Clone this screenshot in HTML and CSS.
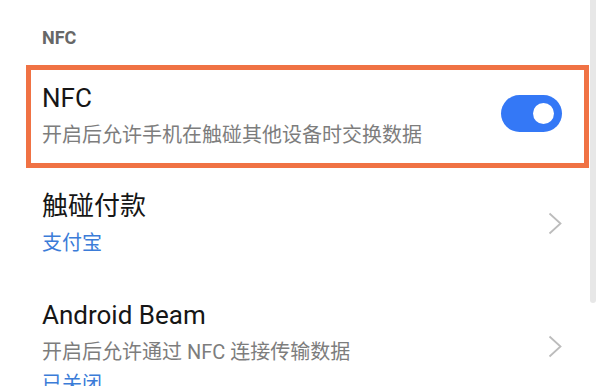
FILE: index.html
```html
<!doctype html>
<html lang="zh-CN">
  <head>
    <meta charset="UTF-8" />
    <meta name="viewport" content="width=device-width, initial-scale=1.0" />
    <title>NFC</title>
    <link rel="stylesheet" href="styles.css">
  </head>
  <body>
    <div class="page">
      <h2 class="section-title">NFC</h2>

      <div class="setting-row highlighted">
        <div class="setting-text">
          <div class="setting-name">NFC</div>
          <div class="setting-desc">开启后允许手机在触碰其他设备时交换数据</div>
        </div>
        <div class="switch on"><span class="switch-knob"></span></div>
      </div>

      <div class="setting-row">
        <div class="setting-text">
          <div class="setting-name">触碰付款</div>
          <div class="setting-value">支付宝</div>
        </div>
        <svg class="chevron" width="14" height="23" viewBox="0 0 14 23">
          <polyline points="1.5,1.5 12.5,11.5 1.5,21.5" />
        </svg>
      </div>

      <div class="setting-row">
        <div class="setting-text">
          <div class="setting-name">Android Beam</div>
          <div class="setting-desc">开启后允许通过 NFC 连接传输数据</div>
          <div class="setting-value">已关闭</div>
        </div>
        <svg class="chevron raised" width="14" height="23" viewBox="0 0 14 23">
          <polyline points="1.5,1.5 12.5,11.5 1.5,21.5" />
        </svg>
      </div>

      <div class="scrollbar"></div>
    </div>
  </body>
</html>
```

FILE: styles.css
```css
body {
  margin: 0;
  background: #ffffff;
  font-family: Roboto, "Noto Sans CJK SC", sans-serif;
  overflow: hidden;
}
.page {
  position: relative;
  height: 386px;
  overflow: hidden;
}
.section-title {
  margin: 0 0 15px 42px;
  padding-top: 26px;
  font-size: 18px;
  line-height: 24px;
  font-weight: bold;
  color: #676767;
}
.setting-row {
  display: flex;
  align-items: center;
  justify-content: space-between;
  padding: 21px 37px 20px 42px;
}
.setting-row.highlighted {
  margin: 0 10px 0 26px;
  padding: 11px 22px 14px 11px;
  border: 5px solid #f07244;
}
.setting-name {
  font-size: 26px;
  line-height: 34px;
  color: #161616;
}
.setting-desc {
  margin-top: 6px;
  font-size: 20px;
  line-height: 28px;
  color: #7d7d7d;
}
.setting-value {
  margin-top: 6px;
  font-size: 20px;
  line-height: 28px;
  color: #3b7cd8;
}
.setting-desc + .setting-value {
  margin-top: 4px;
}
.switch {
  position: relative;
  width: 61px;
  height: 37px;
  border-radius: 19px;
  background: #d6d6d6;
  margin-bottom: 4px;
  flex-shrink: 0;
}
.switch.on {
  background: #3478f6;
}
.switch-knob {
  position: absolute;
  top: 8px;
  right: 8px;
  width: 21px;
  height: 21px;
  border-radius: 50%;
  background: #ffffff;
}
.chevron {
  flex-shrink: 0;
}
.chevron.raised {
  margin-bottom: 4px;
}
.chevron polyline {
  fill: none;
  stroke: #bcbcbc;
  stroke-width: 1.8;
}
.scrollbar {
  position: absolute;
  top: 0;
  left: 590px;
  width: 6px;
  height: 303px;
  border-radius: 0 0 3px 3px;
  background: #e7e7e7;
}
```
